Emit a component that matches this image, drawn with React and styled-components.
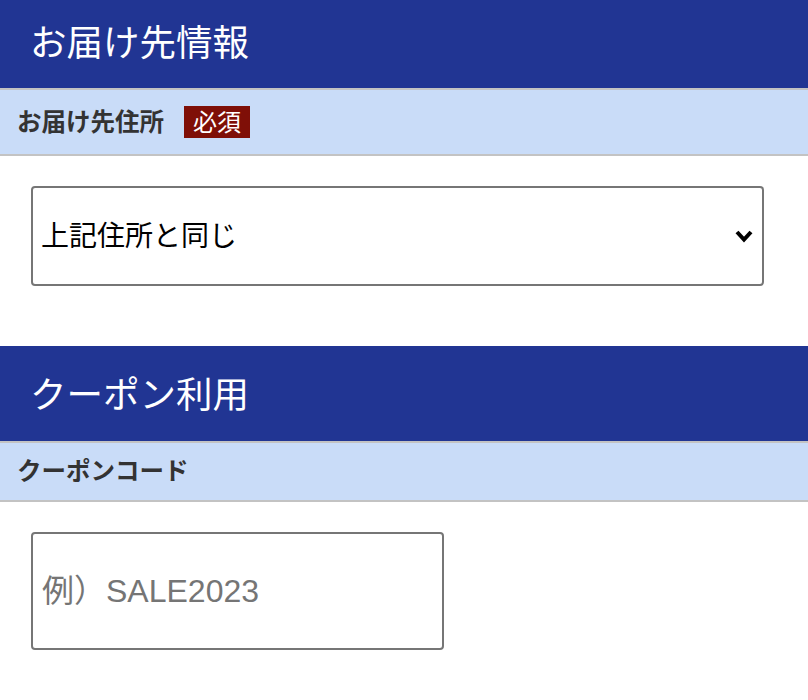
import React from 'react';
import styled, { createGlobalStyle } from 'styled-components';

const GlobalStyle = createGlobalStyle`
    body {
        margin: 0;
        background: #fff;
        font-family: "Liberation Sans", "Noto Sans CJK JP", sans-serif;
    }
`;

const Page = styled.div`
    width: 808px;
    overflow: hidden;
`;

const Section = styled.section`
    display: flex;
    flex-direction: column;
`;

const SectionTitle = styled.h2`
    margin: 0;
    margin-top: ${(props) => (props.first ? '-7px' : '0')};
    height: 97px;
    box-sizing: border-box;
    padding: 0 0 ${(props) => (props.first ? '0' : '2px')} 30px;
    display: flex;
    align-items: center;
    background: #213593;
    color: #fff;
    font-size: 36.5px;
    font-weight: normal;
    border-bottom: 2px solid #c3c3c3;
`;

const FieldLabel = styled.div`
    display: flex;
    align-items: center;
    gap: 20px;
    padding: 16px 17px;
    min-height: 25px;
    background: #c9dcf8;
    border-bottom: 2px solid #c3c3c3;
    color: #333;
    font-size: 24.5px;
    font-weight: bold;
    line-height: 25px;
`;

const Required = styled.span`
    display: inline-flex;
    align-items: center;
    height: 32px;
    padding: 0 9px;
    background: #7f0f07;
    color: #fff;
    font-size: 24px;
    font-weight: normal;
`;

const FieldBody = styled.div`
    padding: 30px 44px 60px 31px;
`;

const SelectWrap = styled.div`
    position: relative;
    width: 733px;
`;

const Select = styled.select`
    appearance: none;
    width: 100%;
    height: 100px;
    box-sizing: border-box;
    padding: 0 50px 0 8px;
    border: 2px solid #767676;
    border-radius: 4px;
    background: #fff;
    color: #000;
    font-family: "Liberation Sans", "Noto Sans CJK JP", sans-serif;
    font-size: 28px;
    outline: none;
`;

const Chevron = styled.svg`
    position: absolute;
    right: 11px;
    top: 44px;
    width: 18px;
    height: 13px;
    pointer-events: none;
`;

const TextInput = styled.input`
    width: 413px;
    height: 118px;
    box-sizing: border-box;
    padding: 0 9px;
    border: 2px solid #767676;
    border-radius: 4px;
    font-family: "Liberation Sans", "Noto Sans CJK JP", sans-serif;
    font-size: 32px;
    color: #000;
    outline: none;

    &::placeholder {
        color: #757575;
    }
`;

export default function App() {
    return (
        <Page>
            <GlobalStyle />
            <Section>
                <SectionTitle first>お届け先情報</SectionTitle>
                <FieldLabel>
                    お届け先住所
                    <Required>必須</Required>
                </FieldLabel>
                <FieldBody>
                    <SelectWrap>
                        <Select defaultValue="same">
                            <option value="same">上記住所と同じ</option>
                            <option value="other">別の住所を指定する</option>
                        </Select>
                        <Chevron viewBox="0 0 18 13">
                            <path d="M2 2 L9 9.5 L16 2" fill="none" stroke="#000" strokeWidth="4" />
                        </Chevron>
                    </SelectWrap>
                </FieldBody>
            </Section>
            <Section>
                <SectionTitle>クーポン利用</SectionTitle>
                <FieldLabel>クーポンコード</FieldLabel>
                <FieldBody>
                    <TextInput placeholder="例）SALE2023" />
                </FieldBody>
            </Section>
        </Page>
    );
}
